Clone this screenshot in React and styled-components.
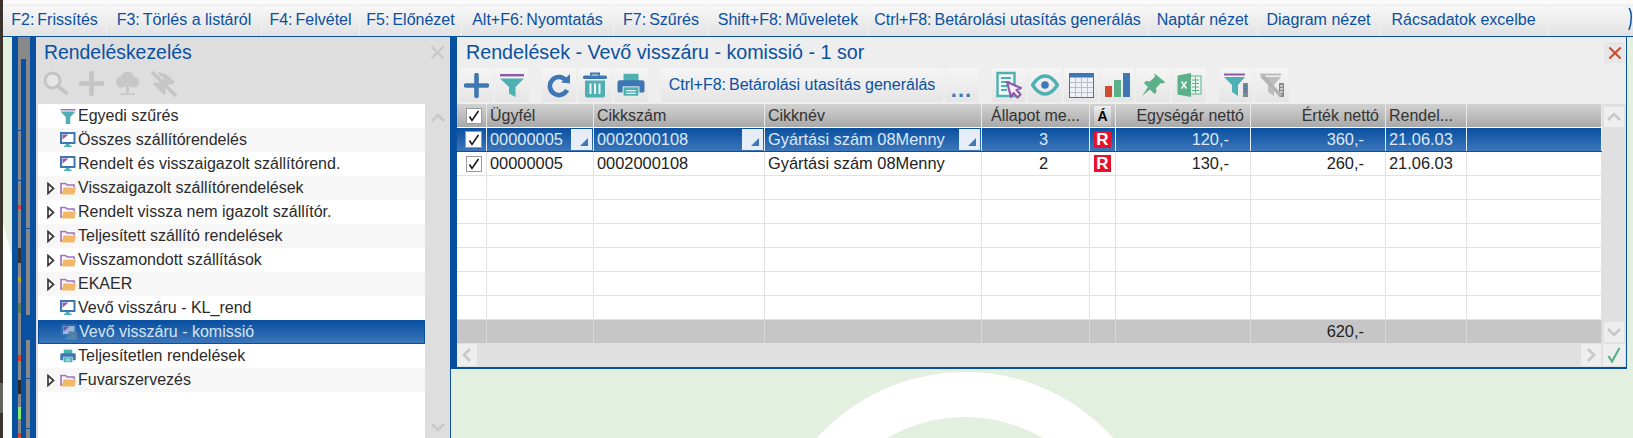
import React from "react";
import styled, { createGlobalStyle } from "styled-components";

const BLUE = "#0a50a1";
const ICON_BLUE = "#3f77b4";
const TEAL = "#4fb0b4";
const PURPLE = "#8f5aa8";
const GREEN = "#5bb08a";

const GlobalStyle = createGlobalStyle`
  html, body { margin: 0; padding: 0; background: #e4f0df; }
  * { box-sizing: border-box; }
  body { font-family: "Liberation Sans", Arial, sans-serif; }
`;

const Page = styled.div`
  position: relative;
  width: 1633px;
  height: 438px;
  display: flex;
  overflow: hidden;
  background: #e4f0df;
`;

const DarkEdge = styled.div`
  width: 3px;
  flex: none;
  background: linear-gradient(#3a342c 383px, #66625c 383px, #66625c 413px, #3a342c 413px);
`;

const Main = styled.div`
  flex: 1;
  min-width: 0;
  display: flex;
  flex-direction: column;
`;

const TopBar = styled.div`
  height: 37px;
  flex: none;
  display: flex;
  padding-top: 5px;
  border-bottom: 1px solid ${BLUE};
  background: linear-gradient(#fafafa 0, #fafafa 4px, #ececec 5px, #f7f7f7 7px, #e2e2e2 100%);
`;

const TopButton = styled.div`
  width: ${p => p.$w}px;
  flex: none;
  display: flex;
  align-items: center;
  justify-content: center;
  padding-bottom: 2px;
  border-right: 1px solid #f1f1f1;
  color: ${BLUE};
  font-size: 16px;
  white-space: nowrap;
`;

const Hot = styled.span`
  margin-right: 3px;
`;

const Body = styled.div`
  flex: 1;
  min-height: 0;
  display: flex;
`;

const GreenGap = styled.div`
  width: 9px;
  flex: none;
  background: linear-gradient(75deg, #fbfdfb 49.5%, #e4f0df 49.5%);
`;

const Rail = styled.div`
  position: relative;
  width: ${p => p.$w}px;
  flex: none;
  background: ${p => p.$bg || BLUE};
`;

const InnerRail = styled(Rail)`
  background: linear-gradient(#888 22px, ${BLUE} 22px);
`;

const GreyRail = styled(Rail)`
  background: linear-gradient(#888 0, #888 278px, ${BLUE} 278px, ${BLUE} 303px, #888 303px);
`;

const RailMark = styled.div`
  position: absolute;
  left: 0;
  right: 0;
  top: ${p => p.$top}px;
  height: ${p => p.$h}px;
  background: ${p => p.$c};
`;

const SidePanel = styled.div`
  width: 414px;
  flex: none;
  display: flex;
  flex-direction: column;
  background: #dedede;
`;

const SideTitle = styled.div`
  height: 31px;
  flex: none;
  display: flex;
  align-items: center;
  justify-content: space-between;
  padding: 0 5px 0 8px;
  color: ${BLUE};
  font-size: 19.4px;
`;

const SideTools = styled.div`
  height: 36px;
  flex: none;
  display: flex;
  align-items: center;
  padding: 0 0 5px 7px;
  gap: 11px;
`;

const SideBody = styled.div`
  flex: 1;
  display: flex;
  padding-left: 2px;
  min-height: 0;
`;

const Tree = styled.div`
  width: 387px;
  flex: none;
  background: #fff;
`;

const TreeRow = styled.div`
  height: 24px;
  display: flex;
  align-items: center;
  padding-left: ${p => (p.$arrow ? 9 : 22)}px;
  color: ${p => (p.$active ? "#d8e4f2" : "#2b2b2b")};
  font-size: 16px;
  white-space: nowrap;
  background: ${p => (p.$active ? "linear-gradient(#0a50a1, #3b76ba)" : p.$alt ? "#f7f7f7" : "#fff")};
  border: ${p => (p.$active ? `1px solid ${BLUE}` : "none")};
`;

const TreeIcon = styled.span`
  width: 18px;
  height: 18px;
  flex: none;
  display: flex;
  align-items: center;
`;

const Arrow = styled.span`
  width: 13px;
  flex: none;
  display: flex;
  align-items: center;
`;

const SideScroll = styled.div`
  flex: 1;
  display: flex;
  flex-direction: column;
  align-items: center;
  justify-content: space-between;
  padding: 7px 0 4px;
`;

const RightArea = styled.div`
  flex: 1;
  min-width: 0;
  display: flex;
  flex-direction: column;
`;

const ListPanel = styled.div`
  width: 1177px;
  height: 332px;
  flex: none;
  display: flex;
  flex-direction: column;
  border-left: 7px solid ${BLUE};
  border-right: 1px solid ${BLUE};
  border-bottom: 2px solid ${BLUE};
  background: #eee;
`;

const Backdrop = styled.div`
  flex: 1;
  border-left: 1px solid ${BLUE};
  width: 1177px;
`;

const PanelTitle = styled.div`
  height: 31px;
  flex: none;
  display: flex;
  align-items: center;
  justify-content: space-between;
  padding: 0 1px 0 9px;
  color: ${BLUE};
  font-size: 19.7px;
`;

const CloseButton = styled.div`
  width: 21px;
  height: 21px;
  display: flex;
  align-items: center;
  justify-content: center;
  background: #e6e6e6;
`;

const Tools = styled.div`
  height: 34px;
  flex: none;
  display: flex;
  padding-left: 2px;
  gap: 2px;
`;

const Tool = styled.div`
  width: ${p => p.$w || 34}px;
  margin-left: ${p => p.$gap || 0}px;
  flex: none;
  display: flex;
  align-items: center;
  justify-content: center;
  color: ${BLUE};
  font-size: 16px;
  white-space: nowrap;
  background: linear-gradient(#f5f5f5, #e5e5e5);
`;

const Dots = styled(Tool)`
  align-items: flex-end;
  padding-bottom: 4px;
  font-size: 22px;
  font-weight: bold;
  letter-spacing: 1px;
  line-height: 16px;
  color: ${ICON_BLUE};
`;

const GridWrap = styled.div`
  flex: 1;
  min-height: 0;
  display: flex;
  padding-top: 2px;
`;

const GridArea = styled.div`
  width: 1145px;
  flex: none;
  display: flex;
  flex-direction: column;
  background: #fff;
`;

const Columns = "30px 107px 171px 217px 108px 26px 135px 135px 81px 135px";

const HeaderRow = styled.div`
  height: 24px;
  flex: none;
  display: grid;
  grid-template-columns: ${Columns};
  background: linear-gradient(#d2d2d2, #a9a9a9);
  color: #333;
  font-size: 16px;
  border-bottom: 1px solid #fff;
`;

const HeaderCell = styled.div`
  display: flex;
  align-items: center;
  justify-content: ${p => (p.$right ? "flex-end" : p.$center ? "center" : "flex-start")};
  padding: ${p => (p.$right ? "0 6px 0 0" : p.$center ? "0" : "0 0 0 3px")};
  border-right: 1px solid #e8e8e8;
  white-space: nowrap;
  overflow: hidden;
`;

const AccentHead = styled.span`
  width: 17px;
  height: 20px;
  display: flex;
  align-items: center;
  justify-content: center;
  color: #000;
  font-weight: bold;
  font-size: 14px;
  background: linear-gradient(#eee, #bbb);
`;

const DataRow = styled.div`
  height: 24px;
  flex: none;
  display: grid;
  grid-template-columns: ${Columns};
  font-size: 16.4px;
  color: ${p => (p.$selected ? "#dfe9f5" : "#222")};
  background: ${p => (p.$selected ? "linear-gradient(#0a50a1, #3b76ba)" : "#fff")};
  border-bottom: 1px solid ${p => (p.$selected ? BLUE : "#e2e2e2")};
`;

const DataCell = styled.div`
  position: relative;
  display: flex;
  align-items: center;
  justify-content: ${p => (p.$right ? "flex-end" : p.$center ? "center" : "flex-start")};
  padding: ${p => (p.$right ? "0 21px 0 0" : p.$center ? `0 0 0 ${p.$shift || 0}px` : "0 0 0 3px")};
  border-right: 1px solid ${p => (p.$selected ? "#e8eef6" : "#e2e2e2")};
  white-space: nowrap;
  overflow: hidden;
`;

const CornerButton = styled.span`
  position: absolute;
  right: 1px;
  top: 1px;
  bottom: 1px;
  width: 21px;
  background: #e6edf6;

  &::after {
    content: "";
    position: absolute;
    right: 4px;
    bottom: 4px;
    width: 0;
    height: 0;
    border-style: solid;
    border-width: 0 0 8px 8px;
    border-color: transparent transparent #3e78b8 transparent;
  }
`;

const RBadge = styled.span`
  width: 17px;
  height: 17px;
  display: flex;
  align-items: center;
  justify-content: center;
  background: #e8112d;
  color: #fff;
  font-weight: bold;
  font-size: 17px;
`;

const CheckBox = styled.span`
  width: ${p => (p.$big ? 17 : 16)}px;
  height: ${p => (p.$big ? 17 : 16)}px;
  margin-left: ${p => (p.$big ? 5 : 6)}px;
  display: flex;
  align-items: center;
  justify-content: center;
  background: #fff;
  border: 1px solid #9a9a9a;
`;

const EmptyRows = styled.div`
  flex: 1;
  min-height: 0;
`;

const SumRow = styled.div`
  height: 23px;
  flex: none;
  display: grid;
  grid-template-columns: ${Columns};
  background: #c6c6c6;
  color: #222;
  font-size: 16.4px;
`;

const SumCell = styled.div`
  display: flex;
  align-items: center;
  justify-content: flex-end;
  padding-right: 21px;
  border-right: 1px solid #d8d8d8;
`;

const VScroll = styled.div`
  flex: 1;
  display: flex;
  flex-direction: column;
  align-items: center;
  justify-content: space-between;
  background: #e0e0e0;
  padding: 3px 0 1px;
`;

const ScrollButton = styled.div`
  width: ${p => p.$w || 20}px;
  height: ${p => p.$h || 21}px;
  flex: none;
  display: flex;
  align-items: center;
  justify-content: center;
  background: #eee;
`;

const HScroll = styled.div`
  height: 24px;
  flex: none;
  display: flex;
  align-items: center;
  justify-content: space-between;
  padding: 1px 1px 1px 0;
  background: #e0e0e0;
`;

const HRight = styled.div`
  display: flex;
  gap: 2px;
`;

const WatermarkRing = styled.div`
  position: absolute;
  left: 766px;
  top: 372px;
  width: 398px;
  height: 398px;
  border: 45px solid #fff;
  border-radius: 50%;
`;

const CornerGlyph = styled.svg`
  position: absolute;
  right: 0;
  top: 6px;
`;

// icons, all drawn for this screen
const Svg = ({ w = 26, h = 26, vb, children }) => (
  <svg width={w} height={h} viewBox={vb || `0 0 ${w} ${h}`} fill="none">
    {children}
  </svg>
);

const PlusIcon = ({ c = ICON_BLUE, s = 24 }) => (
  <Svg w={s} h={s} vb="0 0 24 24">
    <path d="M12 2v20M2 12h20" stroke={c} strokeWidth="4.4" strokeLinecap="round" />
  </Svg>
);

const FunnelIcon = ({ w = 26, h = 26 }) => (
  <Svg w={w} h={h} vb="0 0 26 26">
    <rect x="1" y="2" width="24" height="2.4" fill={PURPLE} />
    <path d="M1 6.5h24l-8.5 8.500v10l-6.500-3.500v-6.500z" fill={TEAL} />
  </Svg>
);

const RefreshIcon = () => (
  <Svg>
    <path d="M20 8.5a9 9 0 1 0 1 9.5" stroke={ICON_BLUE} strokeWidth="4.6" fill="none" />
    <path d="M15 10.5L24 2v9.5z" fill={ICON_BLUE} />
  </Svg>
);

const TrashIcon = () => (
  <Svg>
    <path d="M9 3.5V1.5h8v2" stroke={ICON_BLUE} strokeWidth="2" />
    <rect x="1" y="3.5" width="24" height="3.6" rx="1.5" fill={ICON_BLUE} />
    <path d="M3 8.5h20v15a2 2 0 0 1-2 2H5a2 2 0 0 1-2-2z" fill={TEAL} />
    <path d="M8.5 11.5v10.5M13 11.5v10.5M17.5 11.5v10.5" stroke="#eef6f6" strokeWidth="2" />
  </Svg>
);

const PrintIcon = ({ s = 28 }) => (
  <Svg w={s} h={s} vb="0 0 30 30">
    <rect x="7" y="3" width="16" height="8" fill={TEAL} />
    <path d="M3 10h24a2.500 2.500 0 0 1 2.500 2.500v9a1.500 1.500 0 0 1-1.500 1.500H2a1.500 1.500 0 0 1-1.500-1.500v-9A2.500 2.500 0 0 1 3 10z" fill={ICON_BLUE} />
    <rect x="6.500" y="17" width="17" height="10" fill={TEAL} stroke="#eef4f4" strokeWidth="1" />
    <path d="M10 21h10M10 24h10" stroke="#eaf6f6" strokeWidth="1.200" />
  </Svg>
);

const EditListIcon = () => (
  <Svg w={26} h={28}>
    <path d="M1.500 2h17v23h-17z" fill="#f2f7f7" stroke={TEAL} strokeWidth="2.400" />
    <path d="M5 7h10M5 11h9M5 15h6M5 19h6" stroke={TEAL} strokeWidth="2" />
    <path d="M11 11l14 6-4.500 2 4 4.500-3 3-4-4.500-2.500 4z" fill="#f5eff8" stroke={PURPLE} strokeWidth="2.200" strokeLinejoin="round" />
  </Svg>
);

const EyeIcon = () => (
  <Svg w={28} h={22}>
    <path d="M1.500 11C6 4 10 2 14 2s8 2 12.500 9C22 18 18 20 14 20S6 18 1.500 11z" stroke={TEAL} strokeWidth="3.400" />
    <circle cx="14" cy="11" r="3.800" fill={ICON_BLUE} />
  </Svg>
);

const TableIcon = () => (
  <Svg w={25} h={25}>
    <rect x="0.500" y="0.500" width="24" height="24" fill="#eef1f5" stroke={ICON_BLUE} />
    <rect x="0.500" y="0.500" width="24" height="4" fill={ICON_BLUE} />
    <path d="M6.500 5v19M12.500 5v19M18.500 5v19M1 9.500h23M1 14.500h23M1 19.500h23" stroke="#b9bfc8" strokeWidth="1" />
  </Svg>
);

const BarsIcon = () => (
  <Svg w={26} h={26}>
    <rect x="1" y="14" width="7" height="11" fill="#d14b2f" />
    <rect x="10" y="8" width="7" height="17" fill={GREEN} />
    <rect x="19" y="1" width="7" height="24" fill={ICON_BLUE} />
  </Svg>
);

const PinIcon = ({ c = GREEN, s = 26 }) => (
  <Svg w={s} h={s} vb="0 0 26 26">
    <path d="M14 1l11 9-1.500 1.500-2.500-.5-5 5 .5 4-2 2-4.500-4.500L2 24l6-9-4-4 2-2 4 .5 5-5-.5-2.500z" fill={c} />
  </Svg>
);

const ExcelIcon = () => (
  <Svg w={25} h={24}>
    <rect x="9" y="3" width="15" height="18" fill="#eef6f1" stroke={GREEN} />
    <path d="M15 7h7M15 10.500h7M15 14h7M15 17.500h7M18.500 4v16" stroke={GREEN} strokeWidth="1" />
    <path d="M0.500 2.500L14 0v24L0.500 21.500z" fill={GREEN} />
    <path d="M4.500 8.500l5 7M9.500 8.500l-5 7" stroke="#fff" strokeWidth="1.500" />
  </Svg>
);

const ColumnFunnel = ({ c = TEAL, bar = PURPLE, rail = ICON_BLUE, off }) => (
  <Svg w={26} h={26}>
    <rect x="1" y="1.500" width="21" height="2" fill={bar} />
    <path d="M1 5h21l-7 8v11l-6-4v-7z" fill={c} />
    <rect x="20" y="11" width="5" height="14" fill="#888" />
    <path d="M21 14h3M21 17h3M21 20h3" stroke={rail} strokeWidth="1.400" />
    {off && <path d="M3 3l19 21" stroke="#b4b4b4" strokeWidth="3.400" />}
  </Svg>
);

const SearchIcon = () => (
  <Svg w={25} h={25}>
    <circle cx="9.500" cy="9.500" r="7.500" fill="#e6e6e6" stroke="#c4c4c4" strokeWidth="3" />
    <path d="M15 15l8 7" stroke="#c4c4c4" strokeWidth="4" strokeLinecap="round" />
  </Svg>
);

const TreeGlyph = () => (
  <Svg w={25} h={25}>
    <circle cx="12.500" cy="7" r="6.500" fill="#c6c6c6" />
    <circle cx="6.500" cy="11" r="5.500" fill="#c6c6c6" />
    <circle cx="18.500" cy="11" r="5.500" fill="#c6c6c6" />
    <path d="M11 14h3v8h-3zM5 22.500h15v1.500H5z" fill="#c6c6c6" />
  </Svg>
);

const PinOff = () => (
  <Svg w={26} h={26}>
    <path d="M7 1l8 2 9 8-3 3-3-1-4 5 1 4-2 2L2 13l2-2 4 1 5-5-5-3z" fill="#c6c6c6" />
    <path d="M2 2l22 22" stroke="#c6c6c6" strokeWidth="3.600" strokeLinecap="round" />
  </Svg>
);

const Chevron = ({ dir = "up", c = "#c8c8c8", s = 14, w = 2.600 }) => {
  const paths = {
    up: "M1 10l6-6 6 6",
    down: "M1 4l6 6 6-6",
    left: "M10 1L4 7l6 6",
    right: "M4 1l6 6-6 6"
  };
  return (
    <Svg w={s} h={s} vb="0 0 14 14">
      <path d={paths[dir]} stroke={c} strokeWidth={w} />
    </Svg>
  );
};

const CloseMark = ({ c, s = 15, w = 2.200 }) => (
  <Svg w={s} h={s} vb="0 0 15 15">
    <path d="M1.500 1.500l12 12M13.500 1.500l-12 12" stroke={c} strokeWidth={w} />
  </Svg>
);

const TickMark = () => (
  <svg width="14" height="14" viewBox="0 0 14 14" fill="none">
    <path d="M2.500 7.500l2.500 4L11.500 2" stroke="#111" strokeWidth="1.500" />
  </svg>
);

const ArrowGlyph = () => (
  <svg width="8" height="13" viewBox="0 0 8 13" fill="none">
    <path d="M1 1.500l5.500 5-5.500 5z" fill="#fff" stroke="#3a3a3a" strokeWidth="1.700" />
  </svg>
);

const MonitorGlyph = ({ dim }) => (
  <svg width="16" height="16" viewBox="0 0 16 16" fill="none" opacity={dim ? 0.55 : 1}>
    <rect x="1" y="1" width="13.500" height="10" fill="#fff" stroke={ICON_BLUE} strokeWidth="2" />
    <path d="M2.500 2.500h6l-6 5z" fill={PURPLE} />
    <path d="M6 12h3.500v1.500H6zM4 13.500h7.500V15H4z" fill={TEAL} />
    {dim && <rect x="8" y="8" width="8" height="8" fill="#6f8fb5" stroke="#8a8a8a" />}
    {dim && <path d="M10.500 9.500l3 2.500-3 2.500z" fill={GREEN} />}
  </svg>
);

const FolderGlyph = () => (
  <svg width="16" height="14" viewBox="0 0 16 14" fill="none">
    <path d="M1 13V2.500h4.500L7 4h7v2" stroke="#a070bd" strokeWidth="1.600" />
    <path d="M1.500 13.500L3.500 6.500H16l-1.500 7z" fill="#f0b868" />
  </svg>
);

const FilterGlyph = () => (
  <svg width="16" height="15" viewBox="0 0 16 15" fill="none">
    <rect x="0.500" y="0" width="15" height="1.500" fill="#a070bd" />
    <path d="M0.500 2.500h15l-5.200 5.500v7h-4.600V8z" fill={TEAL} />
  </svg>
);

const PrintGlyph = () => <PrintIcon s={16} />;

const topButtons = [
  { key: "F2:", label: "Frissítés", w: 104 },
  { key: "F3:", label: "Törlés a listáról", w: 155 },
  { key: "F4:", label: "Felvétel", w: 98 },
  { key: "F5:", label: "Előnézet", w: 102 },
  { key: "Alt+F6:", label: "Nyomtatás", w: 152 },
  { key: "F7:", label: "Szűrés", w: 95 },
  { key: "Shift+F8:", label: "Műveletek", w: 159 },
  { key: "Ctrl+F8:", label: "Betárolási utasítás generálás", w: 280 },
  { label: "Naptár nézet", w: 110 },
  { label: "Diagram nézet", w: 122 },
  { label: "Rácsadatok excelbe", w: 168 }
];

const treeItems = [
  { text: "Egyedi szűrés", icon: "filter" },
  { text: "Összes szállítórendelés", icon: "monitor" },
  { text: "Rendelt és visszaigazolt szállítórend.", icon: "monitor" },
  { text: "Visszaigazolt szállítórendelések", icon: "folder" },
  { text: "Rendelt vissza nem igazolt szállítór.", icon: "folder" },
  { text: "Teljesített szállító rendelések", icon: "folder" },
  { text: "Visszamondott szállítások", icon: "folder" },
  { text: "EKAER", icon: "folder" },
  { text: "Vevő visszáru - KL_rend", icon: "monitor" },
  { text: "Vevő visszáru - komissió", icon: "dim", active: true },
  { text: "Teljesítetlen rendelések", icon: "print" },
  { text: "Fuvarszervezés", icon: "folder" }
];

const treeIcons = {
  filter: <FilterGlyph />,
  monitor: <MonitorGlyph />,
  dim: <MonitorGlyph dim />,
  folder: <FolderGlyph />,
  print: <PrintGlyph />
};

const railMarks = [
  { top: 168, h: 4, c: "#d9402a" },
  { top: 211, h: 15, c: "#333" },
  { top: 240, h: 5, c: "#b9a52c" },
  { top: 266, h: 10, c: "#5c7f55" },
  { top: 318, h: 6, c: "#d9402a" },
  { top: 343, h: 14, c: "#2b2b2b" },
  { top: 370, h: 12, c: "#86f06a" },
  { top: 396, h: 4, c: "#d9402a" },
  { top: 93, h: 1, c: BLUE },
  { top: 143, h: 1, c: BLUE }
];

const innerMarks = [
  { top: 191, h: 1, c: BLUE },
  { top: 341, h: 1, c: BLUE },
  { top: 391, h: 1, c: BLUE }
];

const rows = [
  { id: "00000005", code: "0002000108", name: "Gyártási szám 08Menny", qty: 3, unit: "120,-", total: "360,-", date: "21.06.03" },
  { id: "00000005", code: "0002000108", name: "Gyártási szám 08Menny", qty: 2, unit: "130,-", total: "260,-", date: "21.06.03" }
];

const Row = ({ row, selected }) => (
  <DataRow $selected={selected}>
    <DataCell $selected={selected}>
      <CheckBox $big={selected}><TickMark /></CheckBox>
    </DataCell>
    <DataCell $selected={selected}>{row.id}{selected && <CornerButton />}</DataCell>
    <DataCell $selected={selected}>{row.code}{selected && <CornerButton />}</DataCell>
    <DataCell $selected={selected}>{row.name}{selected && <CornerButton />}</DataCell>
    <DataCell $selected={selected} $center $shift={16}>{row.qty}</DataCell>
    <DataCell $selected={selected} $center><RBadge>R</RBadge></DataCell>
    <DataCell $selected={selected} $right>{row.unit}</DataCell>
    <DataCell $selected={selected} $right>{row.total}</DataCell>
    <DataCell $selected={selected}>{row.date}</DataCell>
    <DataCell $selected={selected} />
  </DataRow>
);

export default function App() {
  return (
    <Page>
      <GlobalStyle />
      <WatermarkRing />
      <DarkEdge />
      <Main>
        <TopBar>
          {topButtons.map(b => (
            <TopButton key={b.label} $w={b.w}>
              {b.key && <Hot>{b.key}</Hot>}
              {b.label}
            </TopButton>
          ))}
        </TopBar>
        <Body>
          <GreenGap />
          <Rail $w={6} />
          <Rail $w={3} $bg="#888">
            {railMarks.map(m => <RailMark key={m.top} $top={m.top} $h={m.h} $c={m.c} />)}
          </Rail>
          <InnerRail $w={5} />
          <GreyRail $w={4}>
            {innerMarks.map(m => <RailMark key={m.top} $top={m.top} $h={m.h} $c={m.c} />)}
          </GreyRail>
          <Rail $w={6} />
          <SidePanel>
            <SideTitle>
              Rendeléskezelés
              <CloseMark c="#c8c8c8" />
            </SideTitle>
            <SideTools>
              <SearchIcon />
              <PlusIcon c="#c4c4c4" s={25} />
              <TreeGlyph />
              <PinOff />
            </SideTools>
            <SideBody>
              <Tree>
                {treeItems.map((item, index) => (
                  <TreeRow
                    key={item.text}
                    $arrow={item.icon === "folder"}
                    $alt={index % 2 === 1}
                    $active={item.active}
                  >
                    {item.icon === "folder" && <Arrow><ArrowGlyph /></Arrow>}
                    <TreeIcon>{treeIcons[item.icon]}</TreeIcon>
                    {item.text}
                  </TreeRow>
                ))}
              </Tree>
              <SideScroll>
                <Chevron dir="up" />
                <Chevron dir="down" />
              </SideScroll>
            </SideBody>
          </SidePanel>
          <RightArea>
            <ListPanel>
              <PanelTitle>
                Rendelések - Vevő visszáru - komissió - 1 sor
                <CloseButton><CloseMark c="#d0492f" s={14} /></CloseButton>
              </PanelTitle>
              <Tools>
                <Tool><PlusIcon s={25} /></Tool>
                <Tool><FunnelIcon /></Tool>
                <Tool $gap={11}><RefreshIcon /></Tool>
                <Tool><TrashIcon /></Tool>
                <Tool><PrintIcon /></Tool>
                <Tool $w={282} $gap={11}><Hot>Ctrl+F8:</Hot>Betárolási utasítás generálás</Tool>
                <Dots $w={33}>...</Dots>
                <Tool $gap={12}><EditListIcon /></Tool>
                <Tool><EyeIcon /></Tool>
                <Tool><TableIcon /></Tool>
                <Tool><BarsIcon /></Tool>
                <Tool><PinIcon /></Tool>
                <Tool><ExcelIcon /></Tool>
                <Tool $gap={11}><ColumnFunnel /></Tool>
                <Tool><ColumnFunnel c="#bdbdbd" bar="#bdbdbd" rail="#ddd" off /></Tool>
              </Tools>
              <GridWrap>
                <GridArea>
                  <HeaderRow>
                    <HeaderCell><CheckBox><TickMark /></CheckBox></HeaderCell>
                    <HeaderCell>Ügyfél</HeaderCell>
                    <HeaderCell>Cikkszám</HeaderCell>
                    <HeaderCell>Cikknév</HeaderCell>
                    <HeaderCell $center>Állapot me...</HeaderCell>
                    <HeaderCell $center><AccentHead>Á</AccentHead></HeaderCell>
                    <HeaderCell $right>Egységár nettó</HeaderCell>
                    <HeaderCell $right>Érték nettó</HeaderCell>
                    <HeaderCell>Rendel...</HeaderCell>
                    <HeaderCell />
                  </HeaderRow>
                  <Row row={rows[0]} selected />
                  <Row row={rows[1]} />
                  <EmptyRows>
                    {[0, 1, 2, 3, 4, 5].map(i => (
                      <DataRow key={i}>
                        {Array.from({ length: 10 }, (_, c) => <DataCell key={c} />)}
                      </DataRow>
                    ))}
                  </EmptyRows>
                  <SumRow>
                    {Array.from({ length: 10 }, (_, c) => (
                      <SumCell key={c}>{c === 7 ? "620,-" : ""}</SumCell>
                    ))}
                  </SumRow>
                </GridArea>
                <VScroll>
                  <ScrollButton $h={20}><Chevron dir="up" /></ScrollButton>
                  <ScrollButton $h={20}><Chevron dir="down" /></ScrollButton>
                </VScroll>
              </GridWrap>
              <HScroll>
                <ScrollButton $w={20} $h={22}><Chevron dir="left" /></ScrollButton>
                <HRight>
                  <ScrollButton $w={20} $h={22}><Chevron dir="right" /></ScrollButton>
                  <ScrollButton $w={22} $h={22}>
                    <svg width="14" height="16" viewBox="0 0 14 16" fill="none">
                      <path d="M1.500 9l3.500 5.500L12.500 1" stroke={GREEN} strokeWidth="2.200" />
                    </svg>
                  </ScrollButton>
                </HRight>
              </HScroll>
            </ListPanel>
            <Backdrop />
          </RightArea>
        </Body>
      </Main>
      <CornerGlyph width="5" height="26" viewBox="0 0 5 26" fill="none">
        <path d="M1 2c3 4 3 14 0 22" stroke={BLUE} strokeWidth="1.500" />
      </CornerGlyph>
    </Page>
  );
}
